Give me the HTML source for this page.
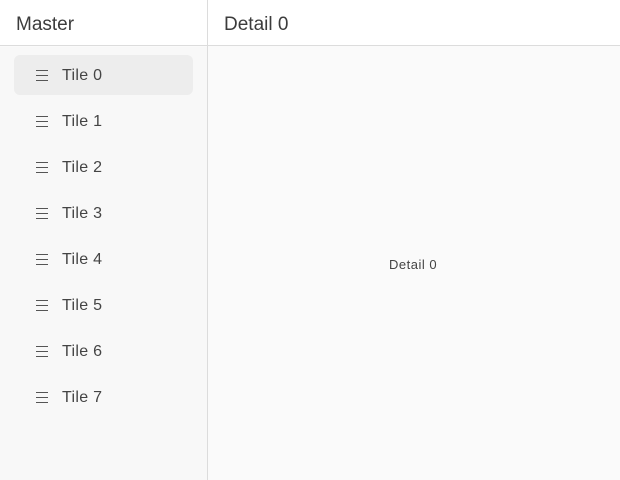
<!DOCTYPE html><html><head><style>
body{margin:0;width:620px;height:480px;font-family:"Liberation Sans",sans-serif;color:#3a3a3a;background:#fafafa;position:relative;overflow:hidden}
.hdr{position:absolute;top:0;height:46px;background:#fff;border-bottom:1px solid #dcdcdc;font-size:19px;line-height:50px;color:#3c3c3c}
.m{left:0;width:207px;padding-left:16px;box-sizing:border-box}
.d{left:208px;width:412px;padding-left:16px;box-sizing:border-box}
.side{position:absolute;left:0;top:47px;width:207px;bottom:0;background:#f8f8f8;border-right:1px solid #dcdcdc}
.vl{position:absolute;left:207px;top:0;height:47px;border-left:1px solid #dcdcdc}
.t{position:absolute;left:14px;width:179px;height:40px;border-radius:6px;font-size:16px;line-height:42px;color:#444}
.t.s{background:#ededed}
.t svg{position:absolute;left:22px;top:14px}
.t span{position:absolute;left:48px;letter-spacing:0.3px}
.c{position:absolute;left:389px;top:257px;font-size:13px;color:#444;letter-spacing:0.5px}
</style></head><body>
<div class="hdr m">Master</div><div class="hdr d">Detail 0</div><div class="vl"></div>
<div class="side"></div>
<div class="t s" style="top:55px"><svg width="12" height="12"><path d="M0 1.5H12M0 6.5H12M0 11.5H12" stroke="#555"/></svg><span>Tile 0</span></div>
<div class="t" style="top:101px"><svg width="12" height="12"><path d="M0 1.5H12M0 6.5H12M0 11.5H12" stroke="#555"/></svg><span>Tile 1</span></div>
<div class="t" style="top:147px"><svg width="12" height="12"><path d="M0 1.5H12M0 6.5H12M0 11.5H12" stroke="#555"/></svg><span>Tile 2</span></div>
<div class="t" style="top:193px"><svg width="12" height="12"><path d="M0 1.5H12M0 6.5H12M0 11.5H12" stroke="#555"/></svg><span>Tile 3</span></div>
<div class="t" style="top:239px"><svg width="12" height="12"><path d="M0 1.5H12M0 6.5H12M0 11.5H12" stroke="#555"/></svg><span>Tile 4</span></div>
<div class="t" style="top:285px"><svg width="12" height="12"><path d="M0 1.5H12M0 6.5H12M0 11.5H12" stroke="#555"/></svg><span>Tile 5</span></div>
<div class="t" style="top:331px"><svg width="12" height="12"><path d="M0 1.5H12M0 6.5H12M0 11.5H12" stroke="#555"/></svg><span>Tile 6</span></div>
<div class="t" style="top:377px"><svg width="12" height="12"><path d="M0 1.5H12M0 6.5H12M0 11.5H12" stroke="#555"/></svg><span>Tile 7</span></div>
<div class="c">Detail 0</div>
</body></html>
